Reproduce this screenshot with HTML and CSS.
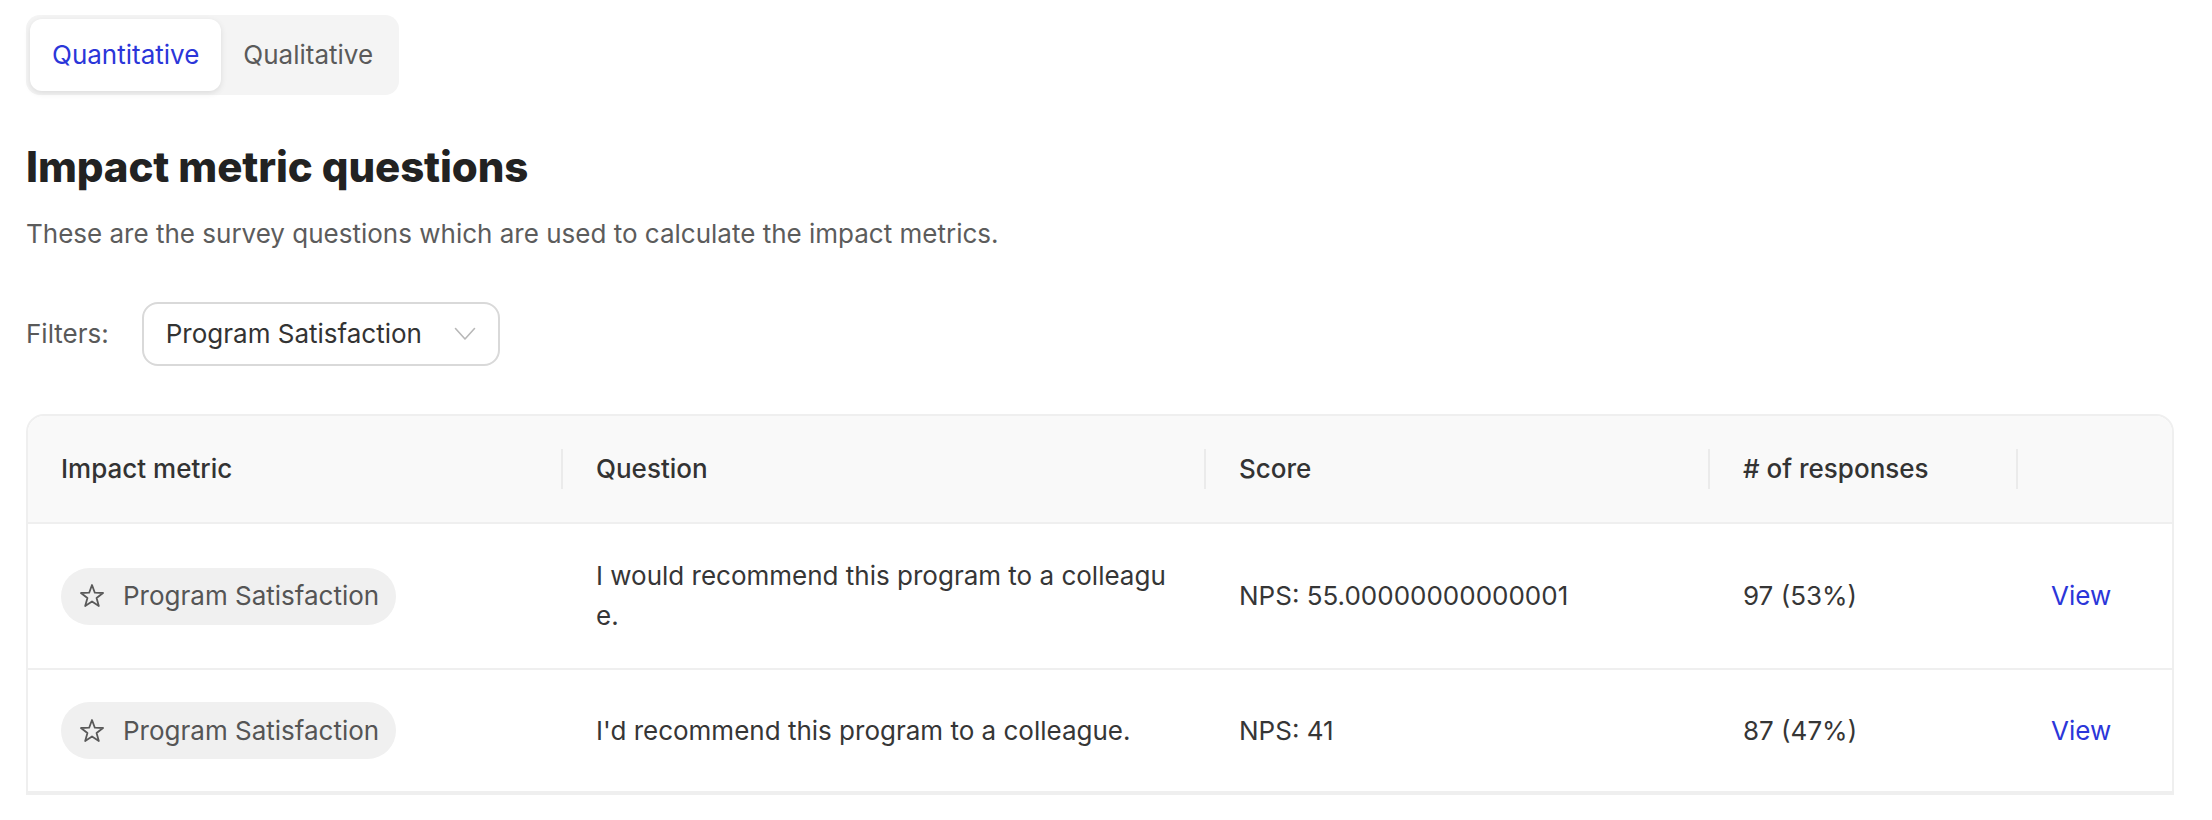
FILE: index.html
```html
<!DOCTYPE html>
<html lang="en">
<head>
<meta charset="utf-8">
<title>Impact metric questions</title>
<link rel="stylesheet" href="styles.css">
</head>
<body>
<div class="page">
  <div class="tabs">
    <div class="tab active">Quantitative</div>
    <div class="tab">Qualitative</div>
  </div>

  <h1 class="title">Impact metric questions</h1>
  <p class="subtitle">These are the survey questions which are used to calculate the impact metrics.</p>

  <div class="filters">
    <span class="filters-label">Filters:</span>
    <div class="select">
      <span class="select-value">Program Satisfaction</span>
      <svg class="chevron" width="22" height="14" viewBox="0 0 22 14"><path d="M1.5 1.5 L11 12 L20.5 1.5" fill="none" stroke="#b8b8b8" stroke-width="1.6" stroke-linecap="round" stroke-linejoin="round"/></svg>
    </div>
  </div>

  <div class="table-wrap">
    <table class="table">
      <colgroup>
        <col class="c1"><col class="c2"><col class="c3"><col class="c4"><col class="c5">
      </colgroup>
      <thead>
        <tr>
          <th class="sep">Impact metric</th>
          <th class="sep">Question</th>
          <th class="sep">Score</th>
          <th class="sep"># of responses</th>
          <th></th>
        </tr>
      </thead>
      <tbody>
        <tr>
          <td><span class="chip"><svg class="star" width="24" height="24" viewBox="0 0 24 24"><path d="M12 1 L14.82 8.72 L23.03 9.02 L16.56 14.08 L18.82 21.98 L12 17.4 L5.18 21.98 L7.44 14.08 L0.97 9.02 L9.18 8.72 Z" fill="none" stroke="#5a5a5a" stroke-width="1.8" stroke-linejoin="round"/></svg><span>Program Satisfaction</span></span></td>
          <td class="question">I would recommend this program to a colleague.</td>
          <td>NPS: 55.00000000000001</td>
          <td>97 (53%)</td>
          <td><a class="view" href="#">View</a></td>
        </tr>
        <tr>
          <td><span class="chip"><svg class="star" width="24" height="24" viewBox="0 0 24 24"><path d="M12 1 L14.82 8.72 L23.03 9.02 L16.56 14.08 L18.82 21.98 L12 17.4 L5.18 21.98 L7.44 14.08 L0.97 9.02 L9.18 8.72 Z" fill="none" stroke="#5a5a5a" stroke-width="1.8" stroke-linejoin="round"/></svg><span>Program Satisfaction</span></span></td>
          <td class="question">I'd recommend this program to a colleague.</td>
          <td>NPS: 41</td>
          <td>87 (47%)</td>
          <td><a class="view" href="#">View</a></td>
        </tr>
      </tbody>
    </table>
  </div>
</div>
</body>
</html>
```

FILE: styles.css
```css
* { box-sizing: border-box; }

html, body {
  margin: 0;
  padding: 0;
  background: #ffffff;
}

body {
  font-family: Inter, "Noto Sans", "Liberation Sans", sans-serif;
  font-size: 26px;
  line-height: 40px;
  color: #333333;
}

.page {
  padding: 15px 38px 0 26px;
}

/* Segmented tabs */
.tabs {
  display: inline-flex;
  padding: 4px;
  background: #f4f4f4;
  border-radius: 14px;
}

.tab {
  padding: 16px 22px;
  line-height: 40px;
  color: #5a5a5a;
  border-radius: 12px;
}

.tab.active {
  background: #ffffff;
  color: #2b36d9;
  box-shadow: 0 2px 6px rgba(0, 0, 0, 0.10);
}

/* Heading */
.title {
  margin: 47px 0 0 0;
  font-size: 42px;
  line-height: 50px;
  font-weight: 800;
  color: #222222;
  letter-spacing: -0.1px;
}

.subtitle {
  margin: 22px 0 0 0;
  color: #5c5c5c;
}

/* Filters */
.filters {
  display: flex;
  align-items: center;
  gap: 33px;
  margin-top: 48px;
}

.filters-label {
  color: #595959;
}

.select {
  display: flex;
  align-items: center;
  justify-content: space-between;
  width: 358px;
  height: 64px;
  padding: 0 22px 0 22px;
  border: 2px solid #d9d9d9;
  border-radius: 16px;
}

.select-value {
  color: #333333;
}

.chevron {
  display: block;
}

/* Table */
.table-wrap {
  margin-top: 48px;
  border: 2px solid #efefef;
  border-radius: 18px 18px 0 0;
  overflow: hidden;
}

.table {
  width: 100%;
  border-collapse: separate;
  border-spacing: 0;
  table-layout: fixed;
}

.c1 { width: 535px; }
.c2 { width: 643px; }
.c3 { width: 504px; }
.c4 { width: 308px; }
.c5 { width: auto; }

.table th {
  position: relative;
  text-align: left;
  font-weight: 500;
  color: #333333;
  background: #f9f9f9;
  padding: 33px 33px;
  border-bottom: 2px solid #efefef;
}

.table th.sep::after {
  content: "";
  position: absolute;
  right: 0;
  top: 50%;
  width: 2px;
  height: 40px;
  margin-top: -20px;
  background: #ebebeb;
}

.table td {
  padding: 32px 33px;
  vertical-align: middle;
  color: #363636;
  border-bottom: 2px solid #efefef;
}

.table td.question {
  word-break: break-all;
}

.chip {
  display: inline-flex;
  align-items: center;
  gap: 19px;
  height: 57px;
  padding: 0 17px 0 19px;
  background: #f0f0f0;
  border-radius: 29px;
  color: #555555;
}

.star {
  display: block;
  flex: none;
  overflow: visible;
}

.view {
  color: #2b36d9;
  text-decoration: none;
}
```
